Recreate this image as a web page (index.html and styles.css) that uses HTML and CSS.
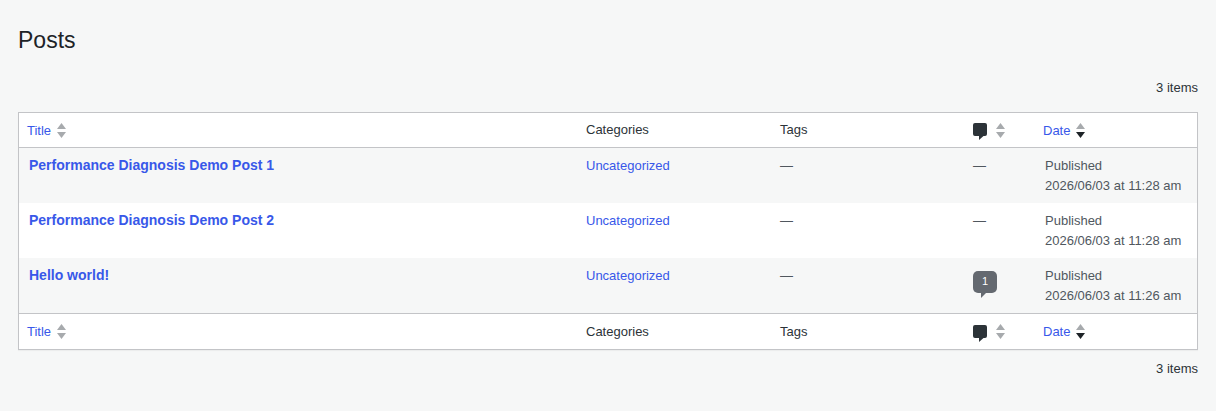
FILE: index.html
```html
<!DOCTYPE html>
<html lang="en">
<head>
<meta charset="utf-8">
<title>Posts</title>
<link rel="stylesheet" href="styles.css">
</head>
<body>
<svg class="defs" width="0" height="0" aria-hidden="true">
  <symbol id="bubble" viewBox="0 0 14 17"><path d="M2 0h10a2 2 0 0 1 2 2v9a2 2 0 0 1-2 2h-1.500l-4.500 4v-4H2a2 2 0 0 1-2-2V2a2 2 0 0 1 2-2z"/></symbol>
</svg>
<main class="wrap">
  <h1 class="page-title">Posts</h1>
  <div class="pager pager-top">3 items</div>
  <table class="posts">
    <colgroup>
      <col class="col-title"><col class="col-cat"><col class="col-tags"><col class="col-com"><col class="col-date">
    </colgroup>
    <thead>
      <tr>
        <th class="sort-title"><a href="#">Title</a><svg class="arrows" viewBox="0 0 9 15"><path class="off" d="M4.500 0L9 6H0z"/><path class="off" d="M0 9h9l-4.500 6z"/></svg></th>
        <th class="plain">Categories</th>
        <th class="plain">Tags</th>
        <th class="sort-com"><svg class="bubble"><use href="#bubble"/></svg><svg class="arrows" viewBox="0 0 9 15"><path class="off" d="M4.500 0L9 6H0z"/><path class="off" d="M0 9h9l-4.500 6z"/></svg></th>
        <th class="sort-date"><a href="#">Date</a><svg class="arrows" viewBox="0 0 9 15"><path class="off" d="M4.500 0L9 6H0z"/><path class="on" d="M0 9h9l-4.500 6z"/></svg></th>
      </tr>
    </thead>
    <tbody>
      <tr class="alt">
        <td><a class="post-link" href="#">Performance Diagnosis Demo Post 1</a></td>
        <td><a href="#">Uncategorized</a></td>
        <td>—</td>
        <td>—</td>
        <td class="date">Published<br>2026/06/03 at 11:28 am</td>
      </tr>
      <tr>
        <td><a class="post-link" href="#">Performance Diagnosis Demo Post 2</a></td>
        <td><a href="#">Uncategorized</a></td>
        <td>—</td>
        <td>—</td>
        <td class="date">Published<br>2026/06/03 at 11:28 am</td>
      </tr>
      <tr class="alt">
        <td><a class="post-link" href="#">Hello world!</a></td>
        <td><a href="#">Uncategorized</a></td>
        <td>—</td>
        <td><span class="count">1</span></td>
        <td class="date">Published<br>2026/06/03 at 11:26 am</td>
      </tr>
    </tbody>
    <tfoot>
      <tr>
        <th class="sort-title"><a href="#">Title</a><svg class="arrows" viewBox="0 0 9 15"><path class="off" d="M4.500 0L9 6H0z"/><path class="off" d="M0 9h9l-4.500 6z"/></svg></th>
        <th class="plain">Categories</th>
        <th class="plain">Tags</th>
        <th class="sort-com"><svg class="bubble"><use href="#bubble"/></svg><svg class="arrows" viewBox="0 0 9 15"><path class="off" d="M4.500 0L9 6H0z"/><path class="off" d="M0 9h9l-4.500 6z"/></svg></th>
        <th class="sort-date"><a href="#">Date</a><svg class="arrows" viewBox="0 0 9 15"><path class="off" d="M4.500 0L9 6H0z"/><path class="on" d="M0 9h9l-4.500 6z"/></svg></th>
      </tr>
    </tfoot>
  </table>
  <div class="pager pager-bottom">3 items</div>
</main>
</body>
</html>
```
FILE: styles.css
```css
html, body {
  margin: 0;
  background: #f6f7f7;
}
body {
  font-family: "Liberation Sans", Arial, sans-serif;
  font-size: 13px;
  color: #2c3338;
  overflow: hidden;
}
.defs { position: absolute; }
.wrap { padding: 25px 18px 0; }
.page-title {
  margin: 0;
  font-size: 23px;
  font-weight: 400;
  line-height: 30px;
  color: #1d2327;
}
.pager {
  text-align: right;
  line-height: 20px;
}
.pager-top { margin: 23px 0 14px; }
.pager-bottom { margin-top: 9px; }
a {
  color: #3858e9;
  text-decoration: none;
}
.posts {
  width: 1180px;
  table-layout: fixed;
  border-collapse: separate;
  border-spacing: 0;
  background: #fff;
  border: 1px solid #c3c4c7;
  box-shadow: 0 1px 1px rgba(0, 0, 0, .04);
}
.col-title { width: 557px; }
.col-cat { width: 194px; }
.col-tags { width: 193px; }
.col-com { width: 72px; }
.col-date { width: 162px; }
th {
  height: 34px;
  padding: 0 10px;
  box-sizing: border-box;
  font-weight: 400;
  text-align: left;
  color: #2c3338;
  line-height: 20px;
  white-space: nowrap;
}
thead th { border-bottom: 1px solid #c3c4c7; height: 35px; }
tfoot th { border-top: 1px solid #c3c4c7; height: 36px; }
th > * { vertical-align: middle; }
.sort-title, .sort-date { padding-left: 8px; }
.arrows {
  width: 9px;
  height: 15px;
  margin-left: 6px;
}
.off { fill: #a7aaad; }
.on { fill: #1d2327; }
.bubble {
  width: 14px;
  height: 17px;
  fill: #2c3338;
  margin-top: 3px;
}
.sort-com .arrows { margin-left: 9px; }
td {
  padding: 8px 10px;
  line-height: 19.5px;
  height: 55px;
  box-sizing: border-box;
  vertical-align: top;
  color: #50575e;
}
.alt td { background: #f6f7f7; }
.post-link {
  font-size: 14px;
  font-weight: 600;
}
.date { padding-left: 10px; }
.count {
  position: relative;
  display: block;
  width: 24px;
  height: 22px;
  margin-top: 5px;
  border-radius: 5px;
  background: #646970;
  color: #fff;
  font-size: 11px;
  line-height: 20px;
  text-align: center;
}
.count::after {
  content: "";
  position: absolute;
  left: 8px;
  top: 22px;
  border-left: 5px solid #646970;
  border-bottom: 5px solid transparent;
  border-right: 0 solid transparent;
}
```
